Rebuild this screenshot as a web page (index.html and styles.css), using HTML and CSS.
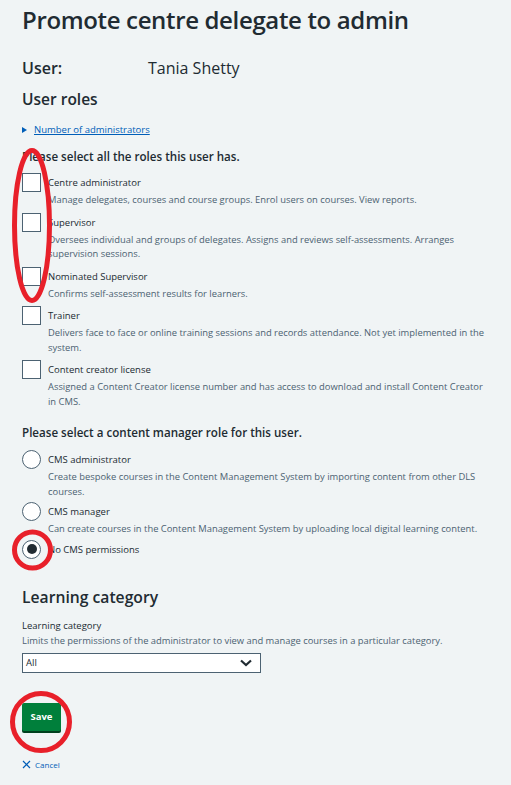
FILE: index.html
```html
<!DOCTYPE html>
<html lang="en">
<head>
<meta charset="utf-8">
<title>Promote centre delegate to admin</title>
<link rel="stylesheet" href="styles.css">
</head>
<body>
<main class="page">
  <h1 class="title">Promote centre delegate to admin</h1>
  <div class="user-row">
    <span class="user-label">User:</span>
    <span class="user-name">Tania Shetty</span>
  </div>
  <h2 class="section-heading">User roles</h2>
  <div class="details">
    <span class="details-arrow"></span>
    <a class="details-link" href="#">Number of administrators</a>
  </div>

  <fieldset class="group group-checks">
    <legend class="legend">Please select all the roles this user has.</legend>
    <div class="option">
      <span class="checkbox"></span>
      <div class="option-text">
        <div class="option-label">Centre administrator</div>
        <div class="option-hint">Manage delegates, courses and course groups. Enrol users on courses. View reports.</div>
      </div>
    </div>
    <div class="option">
      <span class="checkbox"></span>
      <div class="option-text">
        <div class="option-label">Supervisor</div>
        <div class="option-hint">Oversees individual and groups of delegates. Assigns and reviews self-assessments. Arranges supervision sessions.</div>
      </div>
    </div>
    <div class="option">
      <span class="checkbox"></span>
      <div class="option-text">
        <div class="option-label">Nominated Supervisor</div>
        <div class="option-hint">Confirms self-assessment results for learners.</div>
      </div>
    </div>
    <div class="option">
      <span class="checkbox"></span>
      <div class="option-text">
        <div class="option-label">Trainer</div>
        <div class="option-hint">Delivers face to face or online training sessions and records attendance. Not yet implemented in the system.</div>
      </div>
    </div>
    <div class="option">
      <span class="checkbox"></span>
      <div class="option-text">
        <div class="option-label">Content creator license</div>
        <div class="option-hint">Assigned a Content Creator license number and has access to download and install Content Creator in CMS.</div>
      </div>
    </div>
  </fieldset>

  <fieldset class="group group-radios">
    <legend class="legend">Please select a content manager role for this user.</legend>
    <div class="option">
      <span class="radio"></span>
      <div class="option-text">
        <div class="option-label">CMS administrator</div>
        <div class="option-hint">Create bespoke courses in the Content Management System by importing content from other DLS courses.</div>
      </div>
    </div>
    <div class="option">
      <span class="radio"></span>
      <div class="option-text">
        <div class="option-label">CMS manager</div>
        <div class="option-hint">Can create courses in the Content Management System by uploading local digital learning content.</div>
      </div>
    </div>
    <div class="option">
      <span class="radio radio-checked"></span>
      <div class="option-text">
        <div class="option-label">No CMS permissions</div>
      </div>
    </div>
  </fieldset>

  <h2 class="section-heading section-heading-lc">Learning category</h2>
  <div class="field-label">Learning category</div>
  <div class="field-hint">Limits the permissions of the administrator to view and manage courses in a particular category.</div>
  <div class="select">
    <span class="select-value">All</span>
    <svg class="select-chevron" width="12" height="8" viewBox="0 0 12 8"><path d="M1 1.5 L6 6 L11 1.5" fill="none" stroke="#212b32" stroke-width="2.2"/></svg>
  </div>

  <button class="save-button" type="button">Save</button>
  <div class="cancel">
    <svg class="cancel-icon" width="9" height="9" viewBox="0 0 9 9"><path d="M1 1 L8 8 M8 1 L1 8" stroke="#005eb8" stroke-width="1.2" fill="none"/></svg>
    <a class="cancel-link" href="#">Cancel</a>
  </div>
</main>

<svg class="annotations" width="511" height="785" viewBox="0 0 511 785">
  <ellipse cx="32" cy="225.5" rx="17.5" ry="75" fill="none" stroke="#e8202a" stroke-width="5"/>
  <circle cx="32.5" cy="550" r="18" fill="none" stroke="#e8202a" stroke-width="5"/>
  <circle cx="41" cy="722" r="28.5" fill="none" stroke="#e8202a" stroke-width="5"/>
</svg>
</body>
</html>
```

FILE: styles.css
```css
html, body {
  margin: 0;
  padding: 0;
  background: #f0f4f5;
}
body {
  font-family: "Open Sans", "Noto Sans", sans-serif;
  color: #212b32;
  position: relative;
  width: 511px;
  height: 785px;
  overflow: hidden;
}
.page {
  padding: 0 22px;
}
.title {
  margin: 0;
  padding-top: 4px;
  font-size: 24px;
  line-height: 32px;
  font-weight: 600;
  letter-spacing: -0.35px;
}
.user-row {
  display: flex;
  margin-top: 21px;
  font-size: 16px;
  line-height: 22px;
}
.user-label {
  font-weight: 600;
  width: 126px;
}
.user-name {
  font-weight: 400;
}
.section-heading {
  margin: 9px 0 0;
  font-size: 15.5px;
  line-height: 22px;
  font-weight: 600;
}
.details {
  display: flex;
  align-items: center;
  gap: 7px;
  margin-top: 13px;
  font-size: 9.5px;
  line-height: 14px;
}
.details-arrow {
  width: 0;
  height: 0;
  border-top: 3.5px solid transparent;
  border-bottom: 3.5px solid transparent;
  border-left: 5px solid #005eb8;
}
.details-link {
  color: #005eb8;
  text-decoration: underline;
}
.group {
  border: 0;
  margin: 0;
  padding: 0;
  min-width: 0;
}
.group-checks {
  margin-top: 12px;
}
.group-radios {
  margin-top: 11px;
}
.legend {
  padding: 0;
  margin: 0;
  font-size: 11.6px;
  line-height: 16px;
  font-weight: 600;
}
.group > .option:first-of-type {
  margin-top: 9px;
}
.group-checks > .option:first-of-type {
  margin-top: 8px;
}
.option {
  display: flex;
  gap: 7px;
  margin-bottom: 5px;
}
.group-radios .option {
  margin-bottom: 3px;
}
.checkbox {
  flex: none;
  width: 17px;
  height: 17px;
  border: 1.5px solid #4c6272;
  background: #fff;
}
.radio {
  flex: none;
  width: 17px;
  height: 17px;
  border: 1.5px solid #4c6272;
  border-radius: 50%;
  background: #fff;
  display: flex;
  align-items: center;
  justify-content: center;
}
.radio-checked::after {
  content: "";
  width: 10px;
  height: 10px;
  border-radius: 50%;
  background: #212b32;
}
.option-text {
  min-width: 0;
}
.option-label {
  font-size: 9.5px;
  line-height: 20px;
}
.option-hint {
  font-size: 9.4px;
  line-height: 14.5px;
  color: #4c6272;
}
.section-heading-lc {
  margin-top: 23px;
  font-size: 15.7px;
}
.field-label {
  margin-top: 10px;
  font-size: 9.5px;
  line-height: 15px;
}
.field-hint {
  font-size: 9.4px;
  line-height: 15px;
  color: #4c6272;
}
.select {
  margin-top: 5px;
  width: 234px;
  height: 18px;
  border: 1.5px solid #4c6272;
  background: #fff;
  display: flex;
  align-items: center;
  justify-content: space-between;
  padding: 0 0 0 3px;
  font-size: 9.5px;
}
.select-chevron {
  margin-right: 8px;
}
.save-button {
  display: block;
  margin-top: 30px;
  width: 39px;
  height: 28px;
  padding: 0;
  border: 0;
  border-radius: 2px;
  background: #007f3b;
  box-shadow: 0 2px 0 #00401e;
  color: #fff;
  font-family: "Open Sans", "Noto Sans", sans-serif;
  font-size: 9.5px;
  font-weight: 700;
}
.cancel {
  display: flex;
  align-items: center;
  gap: 4px;
  margin-top: 28px;
  font-size: 8px;
  line-height: 12px;
}
.cancel-link {
  color: #005eb8;
  text-decoration: none;
}
.annotations {
  position: absolute;
  top: 0;
  left: 0;
  pointer-events: none;
}
```
